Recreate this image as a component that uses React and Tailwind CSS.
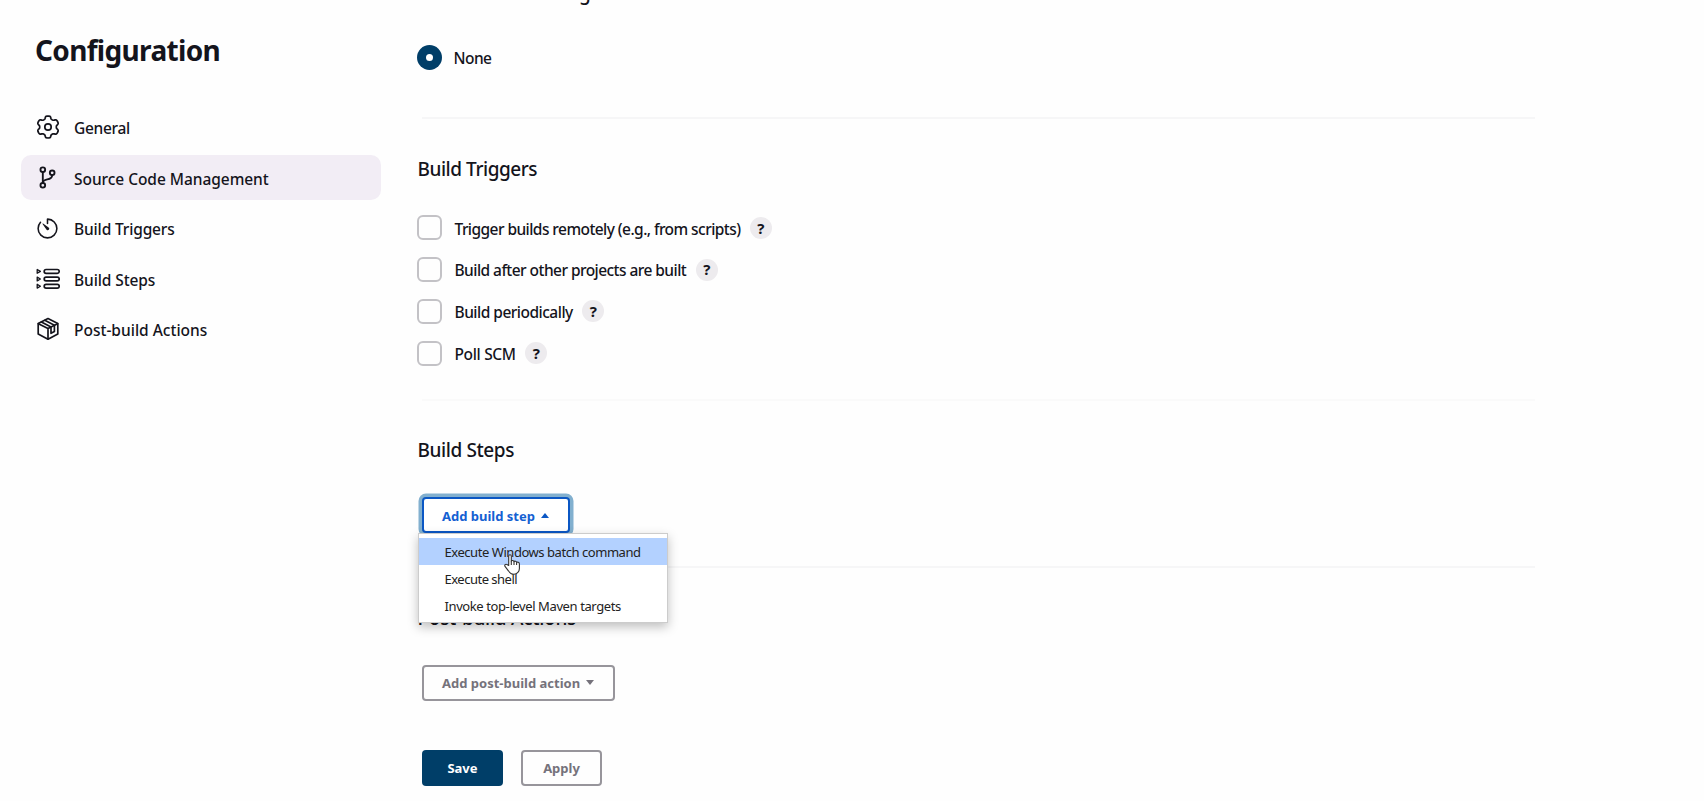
import { IoTimerOutline, IoGitBranchOutline } from "react-icons/io5";

const gearPath =
  Array.from({ length: 120 }, (_, i) => {
    const a = (i / 120) * Math.PI * 2;
    const r = 9.6 + 1.4 * Math.tanh(2 * Math.cos(6 * a) + 0.4);
    return `${i ? "L" : "M"}${(12 + r * Math.sin(a)).toFixed(2)} ${(12 - r * Math.cos(a)).toFixed(2)}`;
  }).join("") + "Z";

function GearIcon() {
  return (
    <svg viewBox="0 0 24 24" className="h-6 w-6" fill="none" stroke="currentColor" strokeWidth="1.7" strokeLinejoin="round">
      <path d={gearPath} />
      <circle cx="12" cy="12" r="3.2" />
    </svg>
  );
}

function StepsIcon() {
  return (
    <svg viewBox="0 0 24 24" className="h-6 w-6" fill="none" stroke="currentColor" strokeLinejoin="round">
      {[4.4, 12, 19.2].map((y) => (
        <g key={y}>
          <path strokeWidth="1.3" d={`M1.2 ${y - 1.9}v3.8l3.2-1.9z`} />
          <rect strokeWidth="1.7" x="8.2" y={y - 1.9} width="15" height="3.8" rx="1.9" />
        </g>
      ))}
    </svg>
  );
}

function PackageIcon() {
  return (
    <svg viewBox="0 0 24 24" className="h-6 w-6" fill="none" stroke="currentColor" strokeWidth="1.7" strokeLinejoin="round" strokeLinecap="round">
      <path d="M12 1.5 21.8 6.5v10.4L12 22.2 2.2 16.9V6.5z" />
      <path d="M2.4 6.7 12 11.6l9.6-4.9M12 11.6v10.4" />
      <path d="M5.4 5l9.6 5v6.3l3.4-1.8V8.3L8.8 3.3" />
    </svg>
  );
}

const navItems = [
  { label: "General", tracking: "tracking-[-0.3px]", icon: <GearIcon /> },
  { label: "Source Code Management", tracking: "tracking-[-0.05px]", icon: <IoGitBranchOutline size={25} className="[&_*]:[stroke-width:38px]" />, active: true },
  { label: "Build Triggers", tracking: "tracking-[-0.15px]", icon: <IoTimerOutline size={25} /> },
  { label: "Build Steps", tracking: "tracking-[-0.1px]", icon: <StepsIcon /> },
  { label: "Post-build Actions", tracking: "tracking-[0px]", icon: <PackageIcon /> },
];

const triggers = [
  { label: "Trigger builds remotely (e.g., from scripts)", tracking: "tracking-[-0.56px]" },
  { label: "Build after other projects are built", tracking: "tracking-[-0.55px]" },
  { label: "Build periodically", tracking: "tracking-[-0.51px]" },
  { label: "Poll SCM", tracking: "tracking-[-0.34px]" },
];

const menuItems = [
  { label: "Execute Windows batch command", tracking: "tracking-[-0.45px]" },
  { label: "Execute shell", tracking: "tracking-[-0.5px]" },
  { label: "Invoke top-level Maven targets", tracking: "tracking-[-0.4px]" },
];

function Sidebar() {
  return (
    <aside className="w-[417px] shrink-0 pl-[21px]">
      <h1 className="mt-[30px] ml-[14px] h-10 text-[28px] leading-10 font-bold tracking-[-0.67px] whitespace-nowrap">Configuration</h1>
      <nav className="mt-[34.6px] flex flex-col gap-[5.6px]">
        {navItems.map((item) => (
          <a
            key={item.label}
            className={`flex h-[45px] w-[360px] items-center rounded-[10px] pl-[13px] text-[15.5px] font-medium ${item.active ? "bg-[#f2edf5]" : ""}`}
          >
            <span className="flex w-[27px] justify-center">{item.icon}</span>
            <span className={`mt-[3px] ml-[13px] whitespace-nowrap ${item.tracking}`}>{item.label}</span>
          </a>
        ))}
      </nav>
    </aside>
  );
}

function Heading({ children, tracking = "tracking-[-0.45px]" }) {
  return <h2 className={`h-7 text-[19px] leading-7 font-medium whitespace-nowrap ${tracking}`}>{children}</h2>;
}

function Divider({ color }) {
  return <div className={`ml-[5px] h-[2px] w-[1113px] ${color}`} />;
}

function Cursor() {
  return (
    <svg viewBox="0 0 17 21" className="absolute top-[20px] left-[85px] h-[21px] w-[17px]" fill="white" stroke="#333" strokeWidth="1.1" strokeLinejoin="round">
      <path d="M4.7 11.5V2.2c0-1.9 2.6-1.9 2.6 0v4.9c.3-1 2.5-.9 2.7.5.5-.8 2.5-.6 2.6.8.8-.6 2.8-.2 2.8 1.5v4.5c0 3-2.2 5.9-5.4 5.9-3 0-4.3-1.4-5.6-3.5L1 12.4c-.8-1.4.6-2.8 2-1.8z" />
      <path d="M7.3 7v4M10 7.6V11M12.6 8.4V11" />
    </svg>
  );
}

function Main() {
  return (
    <main className="flex flex-1 flex-col">
      <div className="-mt-[21px]">
        <Heading tracking="tracking-[-0.45px]">Source Code Management</Heading>
      </div>
      <label className="mt-[38px] flex h-[25px] items-center">
        <span className="flex h-[25px] w-[25px] items-center justify-center rounded-full bg-[#003e68]">
          <span className="h-[7px] w-[7px] rounded-full bg-white" />
        </span>
        <span className="mt-0.5 ml-[11.5px] text-[15.5px] font-medium tracking-[-0.55px]">None</span>
      </label>
      <div className="mt-[47px]">
        <Divider color="bg-[#f6f6f7]" />
      </div>
      <div className="mt-[36px] pl-[0.5px]">
        <Heading>Build Triggers</Heading>
      </div>
      <div className="mt-[32.4px] flex flex-col gap-[16.8px]">
        {triggers.map((t) => (
          <label key={t.label} className="flex h-[25px] items-center">
            <span className="h-[25px] w-[25px] rounded-[6px] border-2 border-[#c3c2c6]" />
            <span className={`mt-[2.5px] ml-[12.5px] text-[15.5px] font-medium whitespace-nowrap ${t.tracking}`}>{t.label}</span>
            <span className="ml-[9.5px] flex h-[22px] w-[22px] items-center justify-center rounded-full bg-[#edebee] text-[15px] font-bold">?</span>
          </label>
        ))}
      </div>
      <div className="mt-[33.6px]">
        <Divider color="bg-[#fafafa]" />
      </div>
      <div className="mt-[35px] pl-[0.5px]">
        <Heading tracking="tracking-[-0.4px]">Build Steps</Heading>
      </div>
      <div className="relative mt-[33px] ml-[5px] h-[36px]">
        <button className="flex h-[36px] w-[148px] items-center rounded-[4px] border-2 border-[#0b57c4] bg-white pt-[2px] pl-[18px] text-[13px] font-bold text-[#1460d2] ring-[3.5px] ring-[#82b0cf]">
          <span className="whitespace-nowrap">Add build step</span>
          <span className="mb-[2px] ml-[6px] border-x-[4.5px] border-b-[5px] border-x-transparent border-b-[#0b57c4]" />
        </button>
        <div className="absolute top-[36px] -left-[4.5px] z-10 h-[90px] w-[250px] border border-[#ccc] bg-white pt-[4px] shadow-[0_4px_10px_rgba(0,0,0,0.25)]">
          {menuItems.map((m, i) => (
            <div key={m.label} className={`flex h-[27px] items-center pt-[1px] pl-[26px] text-[13px] whitespace-nowrap text-[#222] ${m.tracking} ${i === 0 ? "bg-[#b3d1ff]" : ""}`}>
              {m.label}
            </div>
          ))}
          <Cursor />
        </div>
      </div>
      <div className="mt-[33px]">
        <Divider color="bg-[#f6f6f7]" />
      </div>
      <div className="mt-[36px] pl-[0.5px]">
        <Heading tracking="tracking-[-0.27px]">Post-build Actions</Heading>
      </div>
      <button className="mt-[33px] ml-[5px] flex h-[36px] w-[193px] items-center rounded-[4px] border-2 border-[#97959b] pt-px pl-[18px] text-[13px] font-bold text-[#75727b]">
        <span className="whitespace-nowrap">Add post-build action</span>
        <span className="mb-[2px] ml-[6px] border-x-[4.5px] border-t-[5px] border-x-transparent border-t-[#75727b]" />
      </button>
      <div className="mt-[49px] ml-[5px] flex gap-[18px] text-[13px] font-bold">
        <button className="h-[36px] w-[81px] rounded-[4px] bg-[#003e68] pt-px text-white">Save</button>
        <button className="h-[36px] w-[81px] rounded-[4px] border-2 border-[#97959b] pt-px text-[#75727b]">Apply</button>
      </div>
    </main>
  );
}

export default function App() {
  return (
    <div className="flex h-[801px] w-[1704px] overflow-hidden bg-[#fefefe] font-['Noto_Sans',sans-serif] text-[#14141c]">
      <Sidebar />
      <Main />
    </div>
  );
}
